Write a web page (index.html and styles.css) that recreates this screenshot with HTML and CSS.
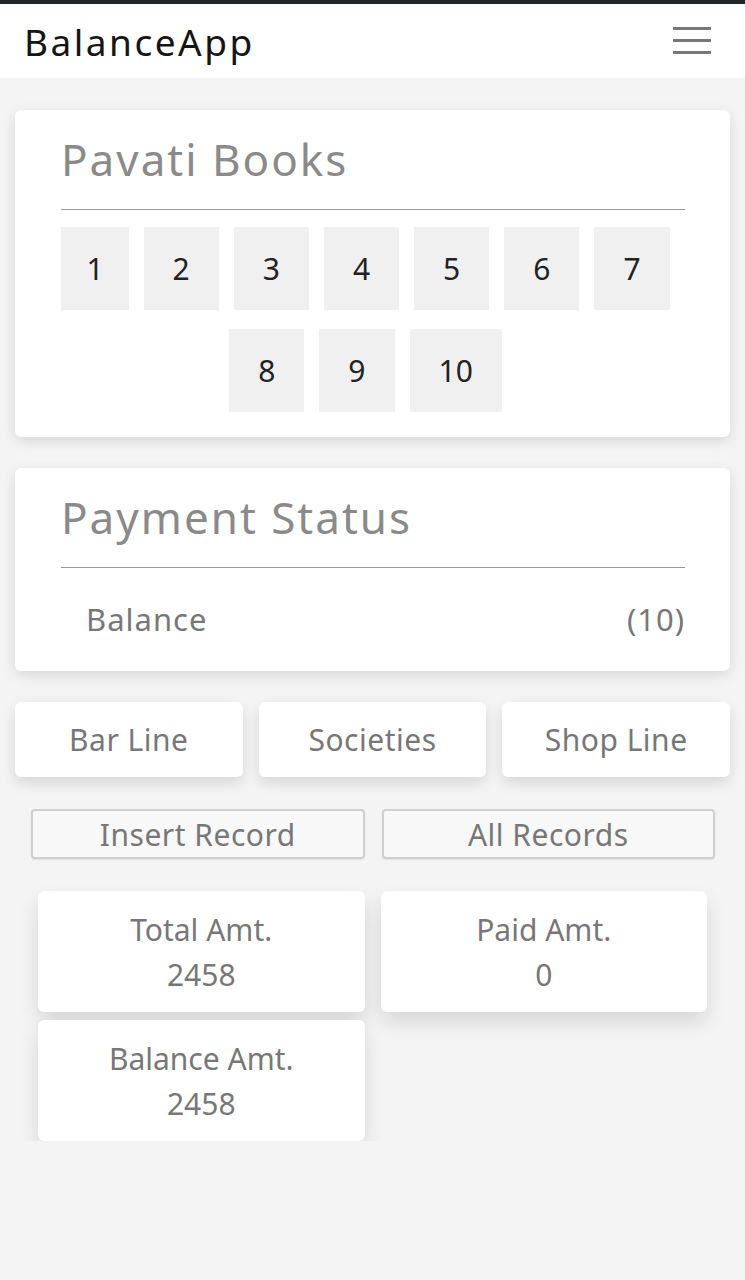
FILE: index.html
```html
<!DOCTYPE html>
<html lang="en">
<head>
<meta charset="utf-8">
<title>BalanceApp</title>
<link rel="stylesheet" href="styles.css">
</head>
<body>
<header class="topbar">
  <div class="brand">BalanceApp</div>
  <button class="menu" aria-label="Menu">
    <svg width="38" height="30" viewBox="0 0 38 30"><g stroke="#777" stroke-width="3"><line x1="0" y1="2.5" x2="38" y2="2.5"/><line x1="0" y1="14.5" x2="38" y2="14.5"/><line x1="0" y1="26.5" x2="38" y2="26.5"/></g></svg>
  </button>
</header>
<main class="main">
  <section class="card">
    <h2 class="card-title">Pavati Books</h2>
    <div class="books">
      <a class="book book-narrow">1</a><a class="book">2</a><a class="book">3</a><a class="book">4</a><a class="book">5</a><a class="book">6</a><a class="book">7</a><a class="book">8</a><a class="book">9</a><a class="book">10</a>
    </div>
  </section>
  <section class="card">
    <h2 class="card-title">Payment Status</h2>
    <div class="status-row"><span>Balance</span><span>(10)</span></div>
  </section>
  <nav class="lines">
    <a class="line-btn">Bar Line</a>
    <a class="line-btn">Societies</a>
    <a class="line-btn">Shop Line</a>
  </nav>
  <div class="actions">
    <button class="action">Insert Record</button>
    <button class="action">All Records</button>
  </div>
  <div class="stats">
    <div class="stat"><div>Total Amt.</div><div>2458</div></div>
    <div class="stat"><div>Paid Amt.</div><div>0</div></div>
    <div class="stat"><div>Balance Amt.</div><div>2458</div></div>
  </div>
</main>
</body>
</html>
```
FILE: styles.css
```css
* { box-sizing: border-box; }
body {
  margin: 0;
  background: #f4f4f4;
  font-family: "Noto Sans", "Open Sans", sans-serif;
  color: #777;
}
.topbar {
  border-top: 4px solid #202328;
  background: #fff;
  height: 78px;
  display: flex;
  align-items: center;
  justify-content: space-between;
  padding: 0 34px 0 24px;
}
.brand {
  font-size: 37px;
  color: #151515;
  letter-spacing: 2.5px;
}
.menu {
  background: none;
  border: 0;
  padding: 0;
  display: flex;
}
.main {
  padding: 32px 15px 0;
}
.card {
  background: #fff;
  border-radius: 6px;
  box-shadow: 0 4px 14px rgba(0,0,0,0.12);
  padding: 16px 45px 25px 46px;
  margin-bottom: 31px;
}
.card-title {
  margin: 0;
  font-weight: 400;
  font-size: 44px;
  letter-spacing: 2px;
  color: #8a8a8a;
  line-height: 66px;
  padding-bottom: 17px;
  border-bottom: 1px solid #999;
}
.books {
  display: flex;
  flex-wrap: wrap;
  justify-content: center;
  row-gap: 19px;
  padding-top: 17px;
}
.book {
  background: #f0f0f0;
  color: #222;
  font-size: 30px;
  height: 83px;
  padding: 0 29px;
  margin-right: 15px;
  display: flex;
  align-items: center;
}
.book-narrow {
  padding: 0 25px;
}
.status-row {
  display: flex;
  justify-content: space-between;
  align-items: center;
  height: 78px;
  padding: 24px 0 0 25px;
  font-size: 31px;
  letter-spacing: 1px;
  color: #777;
}
.lines {
  display: grid;
  grid-template-columns: 1fr 1fr 1fr;
  column-gap: 16px;
  margin-bottom: 32px;
}
.line-btn {
  background: #fff;
  border-radius: 6px;
  box-shadow: 0 6px 14px rgba(0,0,0,0.12);
  height: 75px;
  display: flex;
  align-items: center;
  justify-content: center;
  font-size: 30px;
  letter-spacing: 0.5px;
  color: #777;
}
.actions {
  display: grid;
  grid-template-columns: 1fr 1fr;
  column-gap: 17px;
  padding: 0 15px 0 16px;
  margin-bottom: 32px;
}
.action {
  height: 50px;
  background: #f8f8f8;
  border: 2px solid #cfcfcf;
  border-radius: 4px;
  box-shadow: 0 1px 2px rgba(0,0,0,0.08);
  font-family: inherit;
  font-size: 30px;
  letter-spacing: 0.5px;
  color: #777;
  padding: 0;
}
.stats {
  display: grid;
  grid-template-columns: 1fr 1fr;
  column-gap: 16px;
  row-gap: 8px;
  padding: 0 23px;
}
.stat {
  background: #fff;
  border-radius: 6px;
  box-shadow: 0 10px 20px rgba(0,0,0,0.12);
  height: 121px;
  display: flex;
  flex-direction: column;
  justify-content: center;
  align-items: center;
  font-size: 30px;
  line-height: 45px;
  color: #777;
}
```
